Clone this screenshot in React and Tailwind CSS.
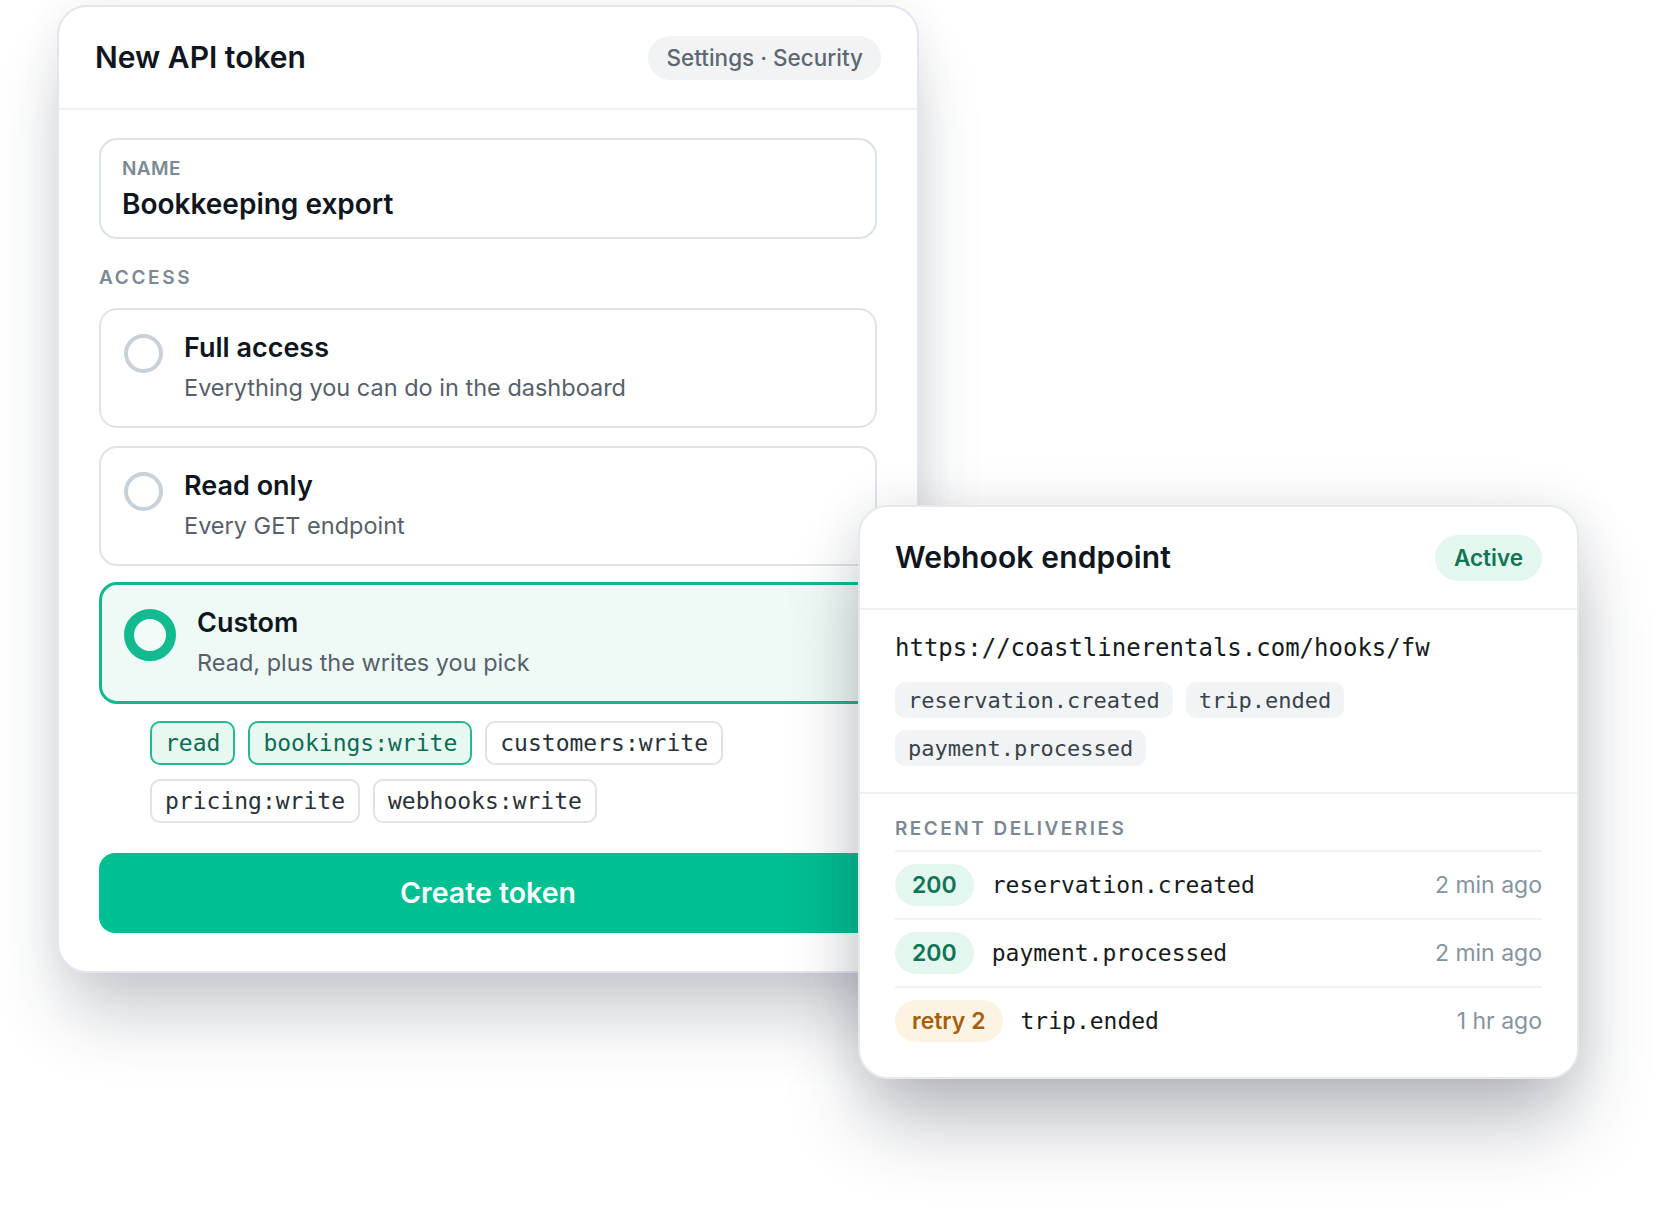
import React from "react";

const mono = "font-['DejaVu_Sans_Mono',monospace]";

function Radio({ checked }) {
  if (checked) {
    return <div className="mt-[3px] w-[52px] h-[52px] shrink-0 rounded-full border-[10px] border-[#12bb8f] bg-[#f3fbf8]" />;
  }
  return <div className="mt-[3px] w-[39px] h-[39px] shrink-0 rounded-full border-[4px] border-[#c9d1d8] bg-white" />;
}

function Option({ title, desc, checked, className = "" }) {
  return (
    <div
      className={
        "flex items-start gap-[21px] rounded-[18px] pt-[21px] pb-[21px] " +
        (checked
          ? "border-[3px] border-[#13b88e] bg-[#effaf6] px-[22px] "
          : "border-2 border-[#e0e4e8] bg-white px-[23px] ") +
        className
      }
    >
      <Radio checked={checked} />
      <div className="flex flex-col">
        <div className="text-[27px] leading-[34px] font-semibold text-[#10161d]">{title}</div>
        <div className="mt-[6px] text-[23.5px] leading-[34px] text-[#56606a]">{desc}</div>
      </div>
    </div>
  );
}

function Tag({ children, on }) {
  return (
    <div
      className={
        mono +
        " h-[44px] flex items-center px-[13px] rounded-[10px] border-2 text-[23px] " +
        (on
          ? "bg-[#e7f8f1] border-[#22b994] text-[#0d6b53]"
          : "bg-white border-[#dfe3e7] text-[#2a3139]")
      }
    >
      {children}
    </div>
  );
}

function Chip({ children }) {
  return (
    <div className={mono + " h-[36px] flex items-center px-[13px] rounded-[10px] bg-[#f1f4f6] text-[22px] text-[#3a424a]"}>
      {children}
    </div>
  );
}

function Row({ code, event, time, retry }) {
  return (
    <div className="h-[68px] border-t-2 border-[#eff2f4] flex items-center">
      <div
        className={
          "h-[42px] flex items-center rounded-full text-[23px] font-semibold px-[17px] " +
          (retry ? "bg-[#fdf3e3] text-[#a4610a]" : "bg-[#e4f7ef] text-[#0e7556]")
        }
      >
        {code}
      </div>
      <div className={mono + " ml-[18px] text-[23px] text-[#151a20]"}>{event}</div>
      <div className="ml-auto text-[23px] text-[#8693a0]">{time}</div>
    </div>
  );
}

export default function App() {
  return (
    <div className="relative w-[1668px] h-[1228px] bg-white overflow-hidden font-['Inter',sans-serif]">
      {/* Left card */}
      <div className="ml-[57px] mt-[5px] w-[862px] rounded-[30px] border-2 border-[#e3e6ee] bg-white shadow-[0_50px_70px_-10px_rgba(30,41,59,0.24),0_0_40px_rgba(30,41,59,0.06)]">
        <div className="h-[103px] border-b-2 border-[#eef0f2] px-[36px] flex items-center justify-between">
          <div className="text-[30px] font-semibold text-[#10161d]">New API token</div>
          <div className="h-[44px] px-[18px] rounded-full bg-[#f1f3f5] flex items-center text-[22.5px] font-medium text-[#5d6771]">
            Settings · Security
          </div>
        </div>
        <div className="px-[40px] pt-[28px] pb-[38px]">
          <div className="h-[101px] rounded-[18px] border-2 border-[#dde2e6] px-[21px] flex flex-col justify-center">
            <div className="text-[19px] leading-[24px] font-semibold text-[#7c8995] tracking-[0.02em]">NAME</div>
            <div className="mt-[6px] text-[28px] leading-[34px] font-semibold text-[#10161d]">Bookkeeping export</div>
          </div>
          <div className="mt-[27px] text-[19px] leading-[24px] font-semibold text-[#7c8995] tracking-[0.14em]">ACCESS</div>
          <Option className="mt-[18px]" title="Full access" desc="Everything you can do in the dashboard" />
          <Option className="mt-[18px]" title="Read only" desc="Every GET endpoint" />
          <Option className="mt-[16px]" title="Custom" desc="Read, plus the writes you pick" checked />
          <div className="mt-[17px] pl-[51px] flex flex-wrap gap-x-[13px] gap-y-[14px] w-[640px]">
            <Tag on>read</Tag>
            <Tag on>bookings:write</Tag>
            <Tag>customers:write</Tag>
            <Tag>pricing:write</Tag>
            <Tag>webhooks:write</Tag>
          </div>
          <div className="mt-[30px] h-[80px] rounded-[16px] bg-[#00bf91] flex items-center justify-center text-[28.5px] font-semibold text-white">
            Create token
          </div>
        </div>
      </div>

      {/* Webhook card (overlapping window) */}
      <div className="absolute left-[858px] top-[505px] w-[721px] rounded-[30px] border-2 border-[#e6e9ec] bg-white shadow-[0_50px_80px_-10px_rgba(30,41,59,0.32),0_0_50px_rgba(30,41,59,0.1)]">
        <div className="h-[103px] border-b-2 border-[#eef0f2] px-[35px] flex items-center justify-between">
          <div className="text-[30px] font-semibold text-[#10161d] tracking-[0.005em]">Webhook endpoint</div>
          <div className="h-[46px] px-[19px] rounded-full bg-[#e3f7ef] flex items-center text-[22.5px] font-semibold text-[#0e7556]">
            Active
          </div>
        </div>
        <div className="px-[35px] pt-[20px] pb-[26px] border-b-2 border-[#eef0f2]">
          <div className={mono + " text-[24px] leading-[36px] text-[#151a20]"}>https://coastlinerentals.com/hooks/fw</div>
          <div className="mt-[16px] flex flex-wrap gap-x-[13px] gap-y-[12px]">
            <Chip>reservation.created</Chip>
            <Chip>trip.ended</Chip>
            <Chip>payment.processed</Chip>
          </div>
        </div>
        <div className="px-[35px] pt-[23px] pb-[23px]">
          <div className="text-[19px] leading-[24px] font-semibold text-[#7c8995] tracking-[0.13em]">RECENT DELIVERIES</div>
          <div className="mt-[9px]">
            <Row code="200" event="reservation.created" time="2 min ago" />
            <Row code="200" event="payment.processed" time="2 min ago" />
            <Row code="retry 2" event="trip.ended" time="1 hr ago" retry />
          </div>
        </div>
      </div>
    </div>
  );
}
